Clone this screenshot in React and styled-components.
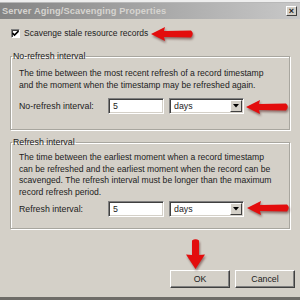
import React from "react"
import styled, { createGlobalStyle } from "styled-components"

const face = "#d4d0c8"
const shadow = "#808080"
const dark = "#404040"

const GlobalStyle = createGlobalStyle`
  html, body {
    margin: 0;
    padding: 0;
    background: ${face};
  }
  body {
    font-family: "Liberation Sans", Arial, sans-serif;
    color: #1c1c1c;
  }
`

const StyledWindow = styled.div`
  position: relative;
  width: 300px;
  height: 300px;
  overflow: hidden;
  background: ${face};
  display: flex;
  flex-direction: column;
`

const StyledTopStrip = styled.div`
  height: 2px;
  flex-shrink: 0;
  background: #eeeeee;
  border-bottom: 1px solid #b8b8b8;
`

const StyledTitleBar = styled.div`
  height: 16px;
  flex-shrink: 0;
  display: flex;
  align-items: center;
  justify-content: space-between;
  padding: 0 3px 0 2px;
  background: linear-gradient(to right, #848484, #a6a6a6 50%, #c8c8c8);
`

const StyledTitle = styled.span`
  color: #d6d4d0;
  font-size: 9.3px;
  font-weight: 700;
  letter-spacing: 0.1px;
`

const StyledCloseButton = styled.div`
  width: 11px;
  height: 10px;
  box-sizing: border-box;
  display: flex;
  align-items: center;
  justify-content: center;
  background: ${face};
  border: 1px solid;
  border-color: #fff ${dark} ${dark} #fff;
  font-size: 9px;
  font-weight: 700;
  line-height: 1;
`

const StyledBody = styled.div`
  flex: 1;
  min-height: 0;
  display: flex;
  flex-direction: column;
  padding: 0 10px 0 10px;
`

const StyledCheckRow = styled.label`
  display: flex;
  align-items: center;
  gap: 4px;
  margin: 8px 0 0 1px;
  font-size: 8.5px;
  height: 12px;
`

const StyledCheckbox = styled.span`
  width: 9px;
  height: 9px;
  box-sizing: border-box;
  background: #fff;
  border: 1px solid;
  border-color: ${shadow} #fff #fff ${shadow};
  box-shadow: inset 1px 1px 0 ${dark};
  display: flex;
  align-items: center;
  justify-content: center;
`

const StyledGroup = styled.fieldset`
  margin: ${({ top }) => top}px 0 0 0;
  padding: ${({ padTop }) => padTop}px 8px ${({ padBottom }) => padBottom}px 8px;
  border: 1px solid #a8a69f;
  box-shadow: 1px 1px 0 #fff, inset 1px 1px 0 #fff;
  min-width: 0;
`

const StyledLegend = styled.legend`
  font-size: 8.8px;
  line-height: 11px;
  padding: 0 1px;
  margin-left: -7px;
`

const StyledDescription = styled.p`
  margin: 0;
  font-size: 8.6px;
  line-height: 11.5px;
  white-space: nowrap;
`

const StyledFieldRow = styled.div`
  display: flex;
  align-items: center;
  margin-top: ${({ gap }) => gap}px;
  font-size: 8.8px;
`

const StyledFieldLabel = styled.span`
  width: 89px;
`

const StyledSunken = styled.div`
  width: ${({ w }) => w}px;
  height: 16px;
  box-sizing: border-box;
  background: #fff;
  border: 1px solid;
  border-color: ${shadow} #fff #fff ${shadow};
  box-shadow: inset 1px 1px 0 ${dark}, inset -1px -1px 0 ${face};
  margin-right: 5px;
  display: flex;
  align-items: center;
  padding: 0 1px 0 4px;
  font-size: 8.8px;
`

const StyledSelectText = styled.span`
  flex: 1;
`

const StyledDropButton = styled.span`
  width: 12px;
  height: 12px;
  box-sizing: border-box;
  background: ${face};
  border: 1px solid;
  border-color: #fff ${dark} ${dark} #fff;
  display: flex;
  align-items: center;
  justify-content: center;
`

const StyledButtonRow = styled.div`
  display: flex;
  justify-content: flex-end;
  gap: 5px;
  margin-top: auto;
  margin-bottom: 9px;
  margin-right: -5px;
`

const StyledButton = styled.button`
  width: 60px;
  height: 18px;
  box-sizing: border-box;
  background: ${face};
  border: 1px solid;
  border-color: #fff ${dark} ${dark} #fff;
  box-shadow: inset -1px -1px 0 ${shadow};
  font-family: "Liberation Sans", Arial, sans-serif;
  font-size: 8.8px;
  color: #1c1c1c;
  padding: 0;
`

const StyledBottomLine = styled.div`
  height: 3px;
  flex-shrink: 0;
  background: #6e6c68;
`

const StyledArrow = styled.svg`
  position: absolute;
  left: ${({ x }) => x}px;
  top: ${({ y }) => y}px;
  filter: drop-shadow(1px 2px 1px rgba(60, 0, 0, 0.45));
`

const LeftArrow = ({ x, y }) => (
  <StyledArrow x={x} y={y} width="45" height="16" viewBox="0 0 45 16">
    <path
      d="M1 8 L15 1 L14 5 L41 4.5 Q44.5 7.5 41 11.5 L14 11 L15 15 Z"
      fill="#e30d0d"
    />
  </StyledArrow>
)

const DownArrow = ({ x, y }) => (
  <StyledArrow x={x} y={y} width="21" height="32" viewBox="0 0 21 32">
    <path
      d="M7 2.5 Q10.5 0 14 2.5 L14 17 L20 16.5 L10.5 31 L1 16.5 L7 17 Z"
      fill="#e30d0d"
    />
  </StyledArrow>
)

const Dropdown = ({ value }) => (
  <StyledSunken w={75}>
    <StyledSelectText>{value}</StyledSelectText>
    <StyledDropButton>
      <svg width="6" height="4" viewBox="0 0 6 4">
        <path d="M0 0 H6 L3 3.5 Z" fill="#000" />
      </svg>
    </StyledDropButton>
  </StyledSunken>
)

const IntervalRow = ({ label, value, unit, gap }) => (
  <StyledFieldRow gap={gap}>
    <StyledFieldLabel>{label}</StyledFieldLabel>
    <StyledSunken w={56}>{value}</StyledSunken>
    <Dropdown value={unit} />
  </StyledFieldRow>
)

const App = () => (
  <>
    <GlobalStyle />
    <StyledWindow>
      <StyledTopStrip />
      <StyledTitleBar>
        <StyledTitle>Server Aging/Scavenging Properties</StyledTitle>
        <StyledCloseButton>×</StyledCloseButton>
      </StyledTitleBar>
      <StyledBody>
        <StyledCheckRow>
          <StyledCheckbox>
            <svg width="7" height="7" viewBox="0 0 7 7">
              <path d="M0.5 3 L2.5 5 L6.5 1" stroke="#000" strokeWidth="1.6" fill="none" />
            </svg>
          </StyledCheckbox>
          Scavenge stale resource records
        </StyledCheckRow>
        <StyledGroup top={12} padTop={6} padBottom={15}>
          <StyledLegend>No-refresh interval</StyledLegend>
          <StyledDescription>
            The time between the most recent refresh of a record timestamp
            <br />
            and the moment when the timestamp may be refreshed again.
          </StyledDescription>
          <IntervalRow label="No-refresh interval:" value="5" unit="days" gap={7} />
        </StyledGroup>
        <StyledGroup top={7} padTop={4} padBottom={11}>
          <StyledLegend>Refresh interval</StyledLegend>
          <StyledDescription>
            The time between the earliest moment when a record timestamp
            <br />
            can be refreshed and the earliest moment when the record can be
            <br />
            scavenged. The refresh interval must be longer than the maximum
            <br />
            record refresh period.
          </StyledDescription>
          <IntervalRow label="Refresh interval:" value="5" unit="days" gap={3} />
        </StyledGroup>
        <StyledButtonRow>
          <StyledButton>OK</StyledButton>
          <StyledButton>Cancel</StyledButton>
        </StyledButtonRow>
      </StyledBody>
      <StyledBottomLine />
      <LeftArrow x={150} y={26} />
      <LeftArrow x={245} y={99} />
      <LeftArrow x={246} y={200} />
      <DownArrow x={185} y={238} />
    </StyledWindow>
  </>
)

export default App
